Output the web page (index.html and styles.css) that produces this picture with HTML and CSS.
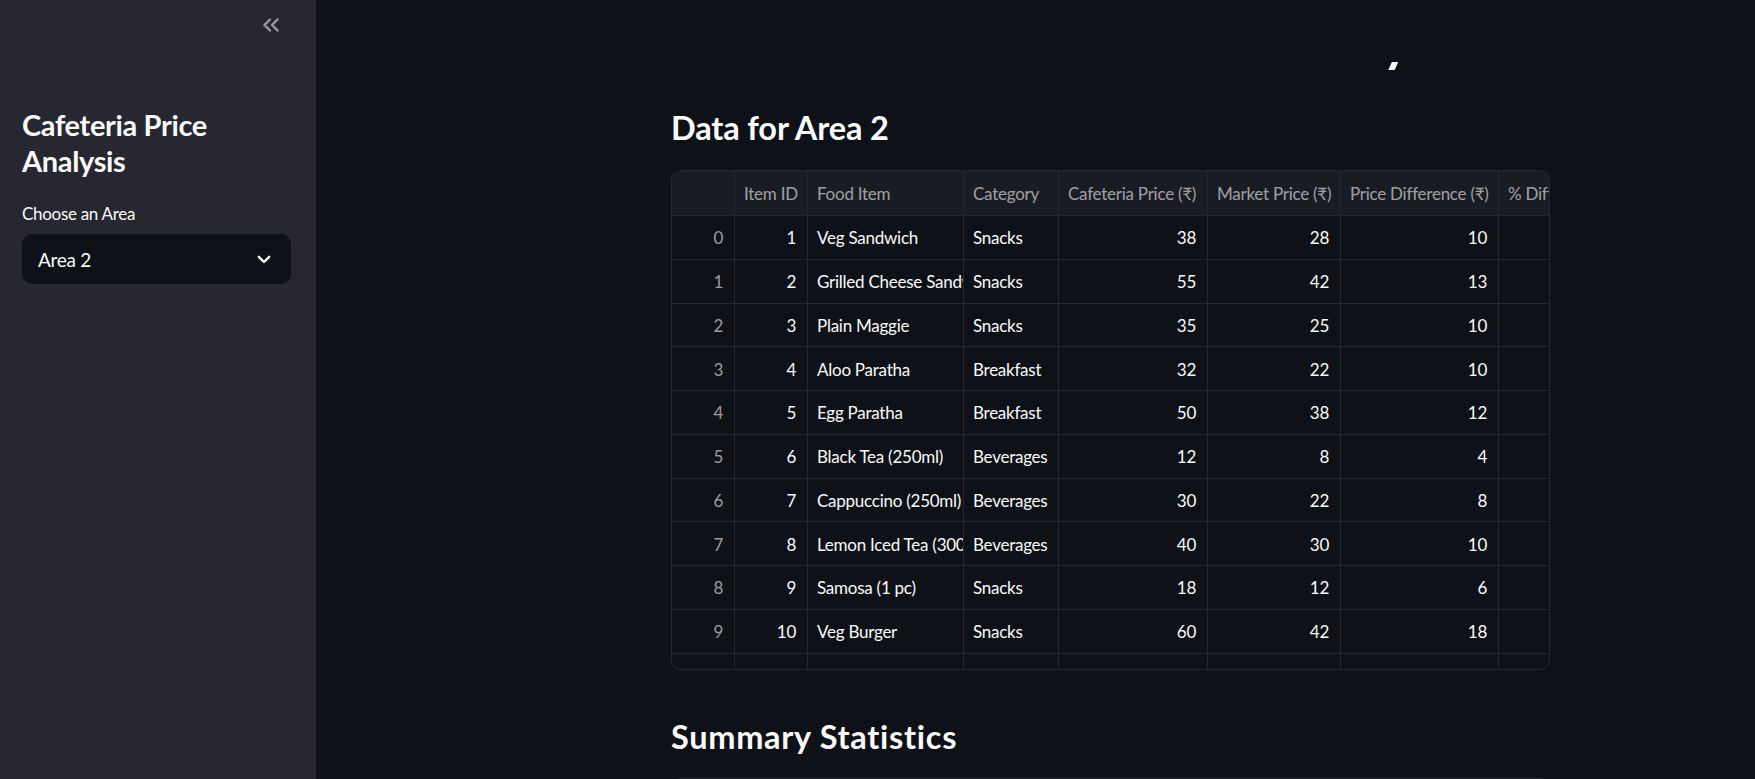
FILE: index.html
```html
<!DOCTYPE html>
<html lang="en">
<head>
<meta charset="utf-8">
<title>Cafeteria Price Analysis</title>
<link rel="stylesheet" href="styles.css">
</head>
<body>
<div class="app">
  <aside class="sidebar">
    <div class="sidebar-top">
      <button class="collapse-btn" aria-label="Collapse sidebar">
        <svg width="18" height="14" viewBox="0 0 18 14"><path d="M8 1.5 L2.5 7 L8 12.5 M15.5 1.5 L10 7 L15.5 12.5" fill="none" stroke="#9c9da3" stroke-width="2.4" stroke-linecap="round" stroke-linejoin="round"/></svg>
      </button>
    </div>
    <h1 class="sidebar-title">Cafeteria Price Analysis</h1>
    <label class="field-label">Choose an Area</label>
    <div class="select">
      <span class="select-value">Area 2</span>
      <svg class="select-chevron" width="14" height="9" viewBox="0 0 14 9"><path d="M1.8 1.8 L7 7 L12.2 1.8" fill="none" stroke="#fafafa" stroke-width="2.4" stroke-linecap="round" stroke-linejoin="round"/></svg>
    </div>
  </aside>

  <main class="main">
    <div class="app-header"></div>
    <div class="block">
      <h1 class="page-title">Cafeteria vs Market Price Analysis</h1>

      <h2 class="section-title">Data for Area 2</h2>

      <div class="grid-frame">
        <div class="grid-row grid-head">
          <div class="cell"></div>
          <div class="cell">Item ID</div>
          <div class="cell">Food Item</div>
          <div class="cell">Category</div>
          <div class="cell">Cafeteria Price (₹)</div>
          <div class="cell">Market Price (₹)</div>
          <div class="cell">Price Difference (₹)</div>
          <div class="cell">% Difference</div>
        </div>
        <div class="grid-row"><div class="cell idx">0</div><div class="cell num">1</div><div class="cell">Veg Sandwich</div><div class="cell">Snacks</div><div class="cell num">38</div><div class="cell num">28</div><div class="cell num">10</div><div class="cell num">35.7143</div></div>
        <div class="grid-row"><div class="cell idx">1</div><div class="cell num">2</div><div class="cell">Grilled Cheese Sandwich</div><div class="cell">Snacks</div><div class="cell num">55</div><div class="cell num">42</div><div class="cell num">13</div><div class="cell num">30.9524</div></div>
        <div class="grid-row"><div class="cell idx">2</div><div class="cell num">3</div><div class="cell">Plain Maggie</div><div class="cell">Snacks</div><div class="cell num">35</div><div class="cell num">25</div><div class="cell num">10</div><div class="cell num">40</div></div>
        <div class="grid-row"><div class="cell idx">3</div><div class="cell num">4</div><div class="cell">Aloo Paratha</div><div class="cell">Breakfast</div><div class="cell num">32</div><div class="cell num">22</div><div class="cell num">10</div><div class="cell num">45.4545</div></div>
        <div class="grid-row"><div class="cell idx">4</div><div class="cell num">5</div><div class="cell">Egg Paratha</div><div class="cell">Breakfast</div><div class="cell num">50</div><div class="cell num">38</div><div class="cell num">12</div><div class="cell num">31.5789</div></div>
        <div class="grid-row"><div class="cell idx">5</div><div class="cell num">6</div><div class="cell">Black Tea (250ml)</div><div class="cell">Beverages</div><div class="cell num">12</div><div class="cell num">8</div><div class="cell num">4</div><div class="cell num">50</div></div>
        <div class="grid-row"><div class="cell idx">6</div><div class="cell num">7</div><div class="cell">Cappuccino (250ml)</div><div class="cell">Beverages</div><div class="cell num">30</div><div class="cell num">22</div><div class="cell num">8</div><div class="cell num">36.3636</div></div>
        <div class="grid-row"><div class="cell idx">7</div><div class="cell num">8</div><div class="cell">Lemon Iced Tea (300ml)</div><div class="cell">Beverages</div><div class="cell num">40</div><div class="cell num">30</div><div class="cell num">10</div><div class="cell num">33.3333</div></div>
        <div class="grid-row"><div class="cell idx">8</div><div class="cell num">9</div><div class="cell">Samosa (1 pc)</div><div class="cell">Snacks</div><div class="cell num">18</div><div class="cell num">12</div><div class="cell num">6</div><div class="cell num">50</div></div>
        <div class="grid-row"><div class="cell idx">9</div><div class="cell num">10</div><div class="cell">Veg Burger</div><div class="cell">Snacks</div><div class="cell num">60</div><div class="cell num">42</div><div class="cell num">18</div><div class="cell num">42.8571</div></div>
        <div class="grid-row"><div class="cell idx">10</div><div class="cell num">11</div><div class="cell">Chicken Burger</div><div class="cell">Snacks</div><div class="cell num">80</div><div class="cell num">60</div><div class="cell num">20</div><div class="cell num">33.3333</div></div>
      </div>

      <h2 class="section-title summary-title">Summary Statistics</h2>

      <div class="grid-frame summary-frame">
        <div class="grid-row summary-head">
          <div class="cell"></div>
          <div class="cell">Item ID</div>
        </div>
      </div>
    </div>
  </main>
</div>
</body>
</html>
```

FILE: styles.css
```css
* {
  box-sizing: border-box;
}

html, body {
  margin: 0;
  padding: 0;
  height: 100%;
  overflow: hidden;
  background: #0e1117;
}

body {
  font-family: "Source Sans Pro", Lato, "Noto Sans", sans-serif;
  color: #fafafa;
}

.app {
  display: flex;
  height: 779px;
}

/* Sidebar */
.sidebar {
  width: 316px;
  flex: none;
  background: #262730;
  padding: 0 22px 0 22px;
}

.sidebar-top {
  display: flex;
  justify-content: flex-end;
  padding-top: 18px;
  padding-right: 14px;
  height: 107px;
}

.collapse-btn {
  background: none;
  border: none;
  padding: 0;
  width: 18px;
  height: 14px;
  cursor: pointer;
}

.sidebar-title {
  margin: 0;
  font-size: 29px;
  line-height: 36px;
  font-weight: 700;
  letter-spacing: -0.35px;
  color: #fafafa;
}

.field-label {
  display: block;
  margin-top: 24px;
  font-size: 17px;
  line-height: 21px;
  letter-spacing: -0.3px;
  color: #fafafa;
}

.select {
  margin-top: 10px;
  height: 50px;
  width: 269px;
  border-radius: 10px;
  background: #0e1117;
  display: flex;
  align-items: center;
  justify-content: space-between;
  padding: 0 20px 0 16px;
}

.select-value {
  font-size: 19px;
  letter-spacing: -0.3px;
  color: #fafafa;
}

/* Main */
.main {
  flex: 1;
  position: relative;
  overflow: hidden;
}

.app-header {
  position: absolute;
  top: 0;
  left: 0;
  right: 0;
  height: 62px;
  background: #0e1117;
  z-index: 2;
}

.block {
  width: 879px;
  margin-left: 355px;
  padding-top: 9px;
}

.page-title {
  margin: 0;
  font-size: 53px;
  line-height: 64px;
  font-weight: 700;
  white-space: nowrap;
}

.section-title {
  margin: 35px 0 0 0;
  font-size: 32.5px;
  line-height: 40px;
  font-weight: 700;
  letter-spacing: -0.15px;
}

.summary-title {
  margin-top: 47px;
  letter-spacing: 0.7px;
}

/* Data grid */
.grid-frame {
  margin-top: 22px;
  width: 879px;
  height: 500px;
  border: 1px solid #26282e;
  border-radius: 10px;
  overflow: hidden;
}

.grid-row {
  display: grid;
  grid-template-columns: 63px 73px 156px 95px 149px 133px 158px 200px;
  height: 43.75px;
  border-bottom: 1px solid #26282e;
  font-size: 17px;
  letter-spacing: -0.25px;
}

.grid-head {
  height: 45px;
  background: #1a1c24;
  color: rgba(250, 250, 250, 0.6);
}

.cell {
  border-right: 1px solid #26282e;
  padding: 1px 9px 0 9px;
  display: flex;
  align-items: center;
  white-space: nowrap;
  overflow: hidden;
  text-overflow: clip;
}

.grid-head .cell {
  padding-top: 0;
}

.cell.num,
.cell.idx {
  justify-content: flex-end;
  padding-right: 11px;
}

.cell.idx {
  color: rgba(250, 250, 250, 0.6);
}

.summary-frame {
  margin-top: 21px;
  height: 60px;
}

.summary-head {
  grid-template-columns: 76px 120px;
  background: #1a1c24;
}
```
